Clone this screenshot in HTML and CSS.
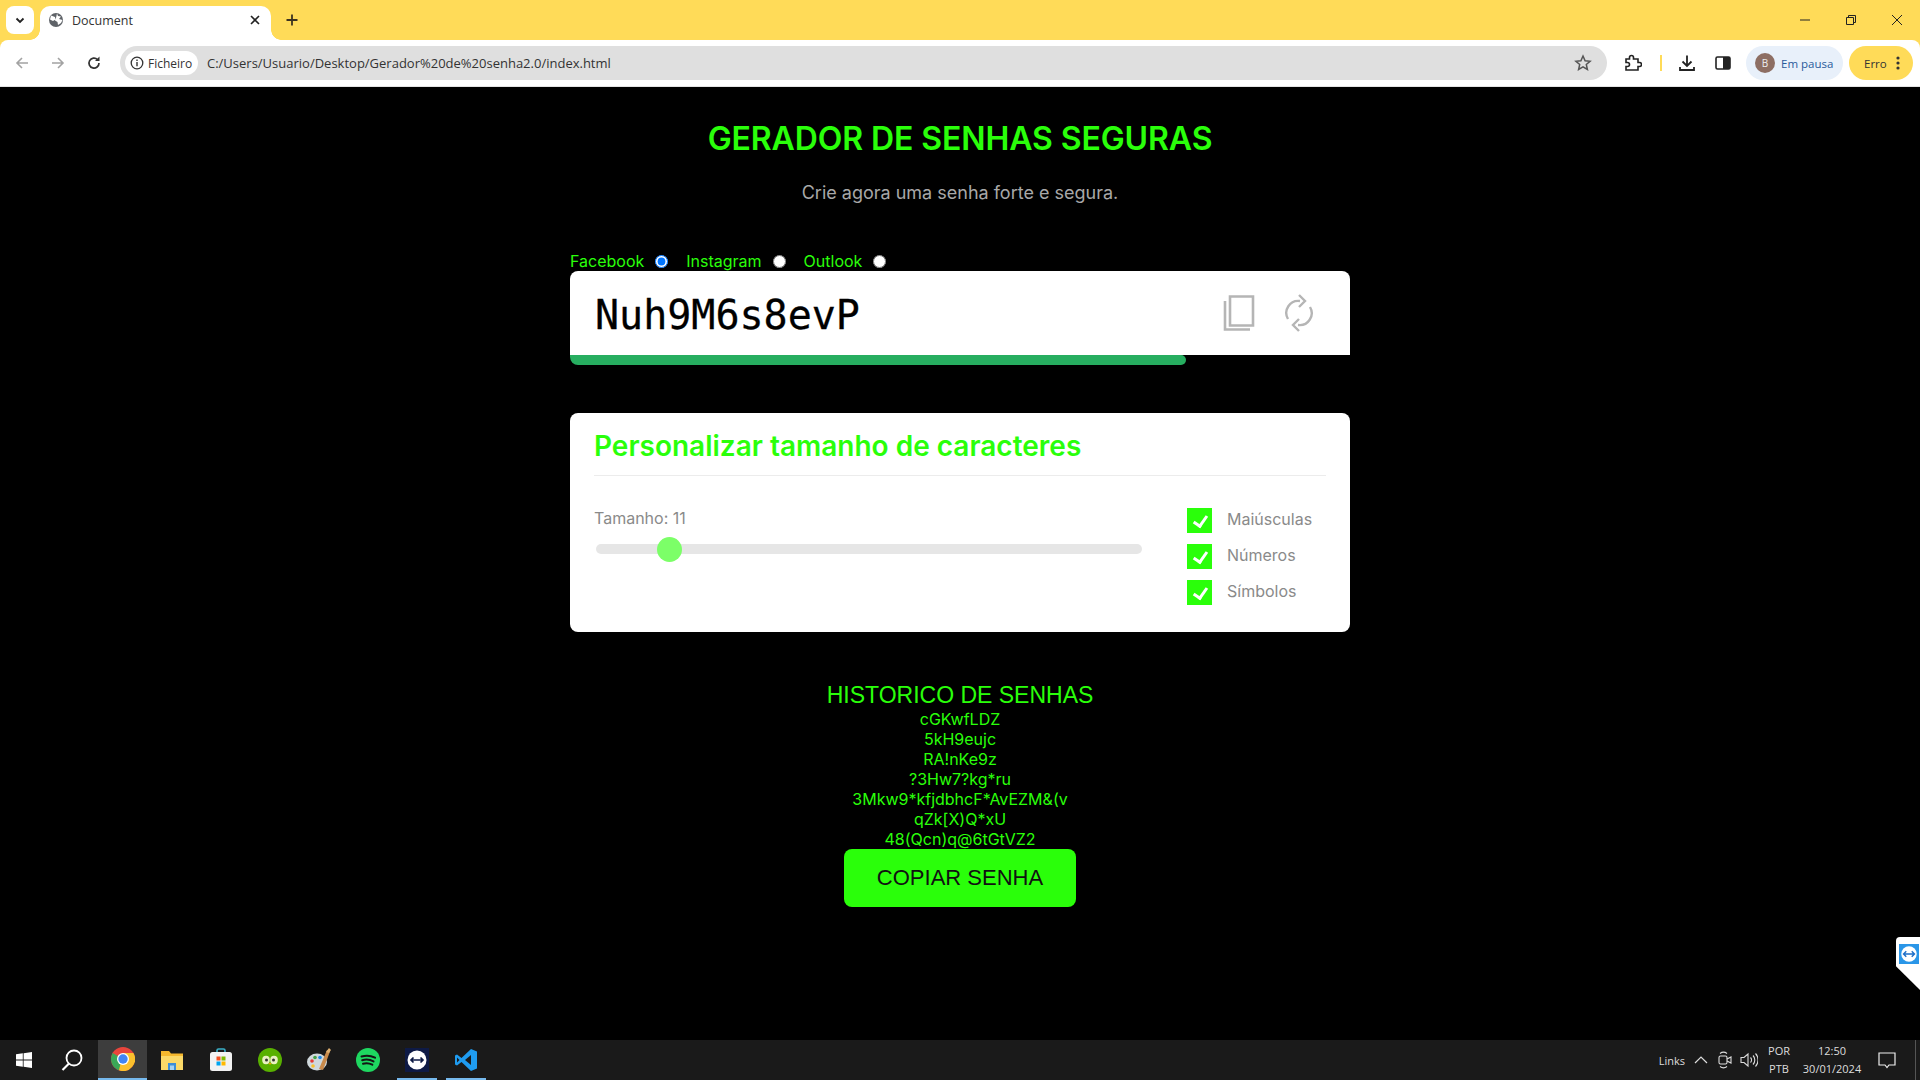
FILE: index.html
```html
<!DOCTYPE html>
<html lang="pt">
<head>
<meta charset="utf-8">
<title>Document</title>
<link rel="stylesheet" href="styles.css">
</head>
<body>
<header class="browser">
  <div class="tabstrip">
    <div class="tab-search"><svg width="12" height="12" viewBox="0 0 12 12"><path d="M2.5 4.5 6 8l3.5-3.5" fill="none" stroke="#222" stroke-width="1.8"/></svg></div>
    <div class="tab">
      <svg class="favicon" width="16" height="16" viewBox="0 0 16 16"><circle cx="8" cy="8" r="7" fill="#5f6368"/><path d="M3 3.5 7 5l.5 2.5L5 9 2 7.5zM9 1.5l1 2.5 3 .5-2 2.5 3.5 1-1.500 3-3 2-.5-3-2.500-1.500 1-2.500z" fill="#fff"/></svg>
      <span class="tab-title">Document</span>
      <svg class="tab-close" width="10" height="10" viewBox="0 0 10 10"><path d="M1 1l8 8M9 1 1 9" stroke="#222" stroke-width="1.600"/></svg>
    </div>
    <svg class="newtab" width="12" height="12" viewBox="0 0 12 12"><path d="M6 .5v11M.5 6h11" stroke="#3c3320" stroke-width="1.800"/></svg>
    <div class="winctl">
      <svg width="12" height="12" viewBox="0 0 12 12"><path d="M1 6h10" stroke="#222" stroke-width="1"/></svg>
      <svg width="12" height="12" viewBox="0 0 12 12"><path d="M1.500 3.500h7v7h-7zM3.500 3.500v-2h7v7h-2" fill="none" stroke="#222" stroke-width="1"/></svg>
      <svg width="12" height="12" viewBox="0 0 12 12"><path d="M1 1l10 10M11 1 1 11" stroke="#222" stroke-width="1"/></svg>
    </div>
  </div>
  <div class="toolbar">
    <svg class="navicon" width="16" height="16" viewBox="0 0 16 16"><path d="M14 8H3M8 3 3 8l5 5" fill="none" stroke="#a3a3a3" stroke-width="1.600"/></svg>
    <svg class="navicon" width="16" height="16" viewBox="0 0 16 16"><path d="M2 8h11M8 3l5 5-5 5" fill="none" stroke="#a3a3a3" stroke-width="1.600"/></svg>
    <svg class="navicon" width="16" height="16" viewBox="0 0 16 16"><path d="M13 8a5 5 0 1 1-1.500-3.500" fill="none" stroke="#333" stroke-width="1.700"/><path d="M13.500 1.500v4.500H9z" fill="#333"/></svg>
    <div class="omnibox">
      <div class="chip">
        <svg width="14" height="14" viewBox="0 0 14 14"><circle cx="7" cy="7" r="5.800" fill="none" stroke="#333" stroke-width="1.300"/><path d="M7 6v4.200M7 3.600v1.300" stroke="#333" stroke-width="1.400"/></svg>
        <span>Ficheiro</span>
      </div>
      <span class="url">C:/Users/Usuario/Desktop/Gerador%20de%20senha2.0/index.html</span>
      <svg class="star" width="18" height="18" viewBox="0 0 18 18"><path d="m9 2 2.100 4.700 5 .5-3.800 3.300 1.100 5L9 12.900 4.600 15.500l1.100-5L1.900 7.200l5-.5z" fill="none" stroke="#555" stroke-width="1.500"/></svg>
    </div>
    <svg class="tool tool-ext" width="18" height="18" viewBox="0 0 18 18"><path d="M2 5h3.500V3.500a2 2 0 0 1 4 0V5H14v3.500h1.500a2 2 0 0 1 0 4H14V16H2v-3.500h1.500a2 2 0 0 0 0-4H2z" fill="none" stroke="#222" stroke-width="1.600"/></svg>
    <span class="toolsep"></span>
    <svg class="tool tool-dl" width="18" height="18" viewBox="0 0 18 18"><path d="M9 1.500v10M4.500 7.500 9 12l4.500-4.500M2 13v3h14v-3" fill="none" stroke="#222" stroke-width="1.800"/></svg>
    <svg class="tool tool-side" width="16" height="16" viewBox="0 0 16 16"><rect x="1" y="2" width="14" height="12" rx="1.500" fill="none" stroke="#222" stroke-width="1.600"/><rect x="8" y="2" width="7" height="12" fill="#222"/></svg>
    <div class="profile"><span class="avatar">B</span><span class="profile-text">Em pausa</span></div>
    <div class="error-pill"><span>Erro</span><svg width="4" height="14" viewBox="0 0 4 14"><circle cx="2" cy="2" r="1.600" fill="#333"/><circle cx="2" cy="7" r="1.600" fill="#333"/><circle cx="2" cy="12" r="1.600" fill="#333"/></svg></div>
  </div>
</header>

<main class="page">
  <h1 class="title">GERADOR DE SENHAS SEGURAS</h1>
  <p class="subtitle">Crie agora uma senha forte e segura.</p>

  <form class="radios">
    <label class="radio-item">Facebook <input type="radio" name="site" checked></label>
    <label class="radio-item">Instagram <input type="radio" name="site"></label>
    <label class="radio-item">Outlook <input type="radio" name="site"></label>
  </form>

  <section class="password-card">
    <div class="password-row">
      <span class="password">Nuh9M6s8evP</span>
      <svg class="pw-copy" width="32" height="36" viewBox="0 0 32 36"><path d="M7 1.500h23v29H7z" fill="none" stroke="#b5b5b5" stroke-width="2.600"/><path d="M2 6v28.500h25" fill="none" stroke="#b5b5b5" stroke-width="2.600"/></svg>
      <svg class="pw-refresh" width="30" height="38" viewBox="0 0 30 38"><path d="M4 25A12 12 0 0 1 16 7M26 13a12 12 0 0 1-12 18" fill="none" stroke="#b5b5b5" stroke-width="2.400"/><path d="M15 1l6 6-6 6M15 25l-6 6 6 6" fill="none" stroke="#b5b5b5" stroke-width="2.400"/></svg>
    </div>
    <div class="strength"><div class="strength-fill"></div></div>
  </section>

  <section class="settings-card">
    <h2 class="settings-title">Personalizar tamanho de caracteres</h2>
    <div class="settings-body">
      <div class="size">
        <label class="size-label" for="size">Tamanho: 11</label>
        <input class="size-range" id="size" type="range" min="4" max="64" value="11">
      </div>
      <div class="options">
        <label class="option"><input type="checkbox" checked><span class="option-text">Maiúsculas</span></label>
        <label class="option"><input type="checkbox" checked><span class="option-text">Números</span></label>
        <label class="option"><input type="checkbox" checked><span class="option-text">Símbolos</span></label>
      </div>
    </div>
  </section>

  <section class="history">
    <h3 class="history-title">HISTORICO DE SENHAS</h3>
    <ul class="history-list">
      <li>cGKwfLDZ</li>
      <li>5kH9eujc</li>
      <li>RA!nKe9z</li>
      <li>?3Hw7?kg*ru</li>
      <li>3Mkw9*kfjdbhcF*AvEZM&amp;(v</li>
      <li>qZk[X)Q*xU</li>
      <li>48(Qcn)q@6tGtVZ2</li>
    </ul>
    <button class="copy-btn" type="button">COPIAR SENHA</button>
  </section>

  <div class="tv-tab">
    <svg width="20" height="20" viewBox="0 0 22 22"><rect width="22" height="22" fill="#2a96e8"/><circle cx="11" cy="11" r="8.500" fill="#fff"/><path d="M5 11h12M8 8l-3 3 3 3M14 8l3 3-3 3" fill="none" stroke="#1e6fc8" stroke-width="1.600"/></svg>
  </div>
</main>

<footer class="taskbar">
  <div class="task-sys">
    <svg width="16" height="16" viewBox="0 0 16 16"><path d="M0 2.300 6.800 1.300v6.300H0zM7.600 1.200 16 0v7.600H7.600zM0 8.400h6.800v6.300L0 13.700zM7.600 8.400H16V16l-8.400-1.200z" fill="#fff"/></svg>
  </div>
  <div class="task-sys">
    <svg width="24" height="24" viewBox="0 0 24 24"><circle cx="14" cy="10" r="7.500" fill="none" stroke="#fff" stroke-width="1.800"/><path d="M9 15.500 2.500 22" stroke="#fff" stroke-width="2.200"/></svg>
  </div>
  <div class="task-apps">
    <div class="task-app active">
      <svg width="24" height="24" viewBox="0 0 24 24"><circle cx="12" cy="12" r="12" fill="#e8453c"/><path d="M12 12 1.600 6A12 12 0 0 0 8 23.300z" fill="#3aa757"/><path d="M12 6h10.400A12 12 0 0 1 8 23.300z" fill="#fbc02d"/><circle cx="12" cy="12" r="6" fill="#fff"/><circle cx="12" cy="12" r="4.700" fill="#4285f4"/></svg>
    </div>
    <div class="task-app">
      <svg width="22" height="20" viewBox="0 0 22 20"><path d="M0 1h8l2 2.500h12V8H0z" fill="#f5b82e"/><path d="M0 6h22v14H0z" fill="#fbd968"/><path d="M7 13h8v7H7z" fill="#3c8ed8"/><path d="M9 15.500h4V20H9z" fill="#a5d2f2"/></svg>
    </div>
    <div class="task-app">
      <svg width="24" height="24" viewBox="0 0 24 24"><path d="M8 5V2.500a1.500 1.500 0 0 1 1.500-1.500h5A1.500 1.500 0 0 1 16 2.500V5" fill="none" stroke="#3ab0c8" stroke-width="1.600"/><rect x="1" y="4" width="22" height="19" rx="2.500" fill="#f2f2f2"/><rect x="7.500" y="8.500" width="4" height="4" fill="#f25022"/><rect x="12.500" y="8.500" width="4" height="4" fill="#7fba00"/><rect x="7.500" y="13.500" width="4" height="4" fill="#00a4ef"/><rect x="12.500" y="13.500" width="4" height="4" fill="#ffb900"/></svg>
    </div>
    <div class="task-app">
      <svg width="24" height="24" viewBox="0 0 24 24"><circle cx="12" cy="12" r="12" fill="#58b000"/><ellipse cx="8" cy="12" rx="3.800" ry="4.200" fill="#e8f0c0"/><ellipse cx="16" cy="12" rx="3.800" ry="4.200" fill="#e8f0c0"/><circle cx="8.500" cy="12" r="1.500" fill="#333"/><circle cx="15.500" cy="12" r="1.500" fill="#333"/><path d="m10.500 15 1.500 2 1.500-2z" fill="#f0a000"/></svg>
    </div>
    <div class="task-app">
      <svg width="26" height="26" viewBox="0 0 26 26"><ellipse cx="11" cy="15" rx="10" ry="8.500" fill="#cfd8dc"/><circle cx="6" cy="14" r="1.800" fill="#e53935"/><circle cx="9" cy="10.500" r="1.800" fill="#43a047"/><circle cx="14" cy="10.500" r="1.800" fill="#1e88e5"/><circle cx="7" cy="19" r="1.800" fill="#fbc02d"/><path d="m13 22 8-19 3 1.500-7 18.500z" fill="#c98a4b"/><path d="m20 5 3-4 2 2-2 3z" fill="#e0b070"/></svg>
    </div>
    <div class="task-app">
      <svg width="24" height="24" viewBox="0 0 24 24"><circle cx="12" cy="12" r="12" fill="#1ed760"/><path d="M5.500 8.500c4.500-1.300 9.500-.9 13.500 1.200M6.200 12.200c3.800-1 8-.6 11.300 1.200M7 15.700c3.200-.8 6.500-.5 9.300 1" fill="none" stroke="#141414" stroke-width="2" stroke-linecap="round"/></svg>
    </div>
    <div class="task-app running">
      <svg width="24" height="24" viewBox="0 0 24 24"><rect width="24" height="24" fill="#0e1a45"/><circle cx="12" cy="12" r="9.500" fill="#fff"/><path d="M6 12h12M8.500 9.500 6 12l2.500 2.500M15.500 9.500 18 12l-2.500 2.500" fill="none" stroke="#0e1a45" stroke-width="1.700"/></svg>
    </div>
    <div class="task-app running">
      <svg width="24" height="24" viewBox="0 0 24 24"><path d="M17 1 7.500 10 3 6.500 1 7.500v9l2 1 4.500-3.500 9.500 9 6-2.500V3.500z" fill="#1f9cf0"/><path d="M17 7v10l-6-5z" fill="#1a1a1a"/><path d="m3 9.500 2.500 2.500L3 14.500z" fill="#1a1a1a"/></svg>
    </div>
  </div>
  <div class="tray">
    <span class="tray-links">Links</span>
    <svg class="tray-chev" width="14" height="8" viewBox="0 0 14 8"><path d="M1 7l6-6 6 6" fill="none" stroke="#ddd" stroke-width="1.200"/></svg>
    <svg class="tray-meet" width="14" height="18" viewBox="0 0 14 18"><rect x="1" y="5" width="8" height="8" rx="1.500" fill="none" stroke="#ddd" stroke-width="1.100"/><path d="m9 8 4-2v6l-4-2M2 2.500c2-1.500 5-1.500 7 0M2 15.500c2 1.500 5 1.500 7 0" fill="none" stroke="#ddd" stroke-width="1.100"/></svg>
    <svg class="tray-vol" width="18" height="16" viewBox="0 0 18 16"><path d="M1 5.500h3L8 2v12l-4-3.500H1z" fill="none" stroke="#ddd" stroke-width="1.100"/><path d="M10.500 5.500a3.500 3.500 0 0 1 0 5M13 3.500a6.500 6.500 0 0 1 0 9M15.500 1.500a9.500 9.500 0 0 1 0 13" fill="none" stroke="#ddd" stroke-width="1.100"/></svg>
    <div class="tray-lang"><span>POR</span><span>PTB</span></div>
    <div class="tray-clock"><span>12:50</span><span>30/01/2024</span></div>
    <svg class="tray-notif" width="18" height="17" viewBox="0 0 18 17"><path d="M1 1h16v12h-6l-2 2.500L7 13H1z" fill="none" stroke="#eee" stroke-width="1.200"/></svg>
    <span class="tray-edge"></span>
  </div>
</footer>
</body>
</html>
```

FILE: styles.css
```css
* { box-sizing: border-box; }
html, body { height: 100%; }
body {
  margin: 0;
  display: flex;
  flex-direction: column;
  height: 1080px;
  overflow: hidden;
  background: #000;
  font-family: Inter, "Liberation Sans", sans-serif;
}

/* browser chrome */
.browser { flex: none; height: 87px; background: #ffdb58; border-bottom: 1px solid #e4e4e4; }
.tabstrip {
  height: 40px;
  display: flex;
  align-items: flex-end;
  padding-left: 6px;
}
.tab-search {
  width: 28px; height: 28px;
  margin-bottom: 6px;
  background: #fff;
  border-radius: 8px;
  display: flex; align-items: center; justify-content: center;
}
.tab {
  position: relative;
  z-index: 1;
  width: 231px; height: 34px;
  margin-left: 6px;
  background: #fff;
  border-radius: 10px 10px 0 0;
  display: flex; align-items: center;
  padding: 0 11px 6px 8px;
}
.tab::before, .tab::after {
  content: "";
  position: absolute;
  bottom: 0;
  width: 10px; height: 10px;
}
.tab::before { left: -10px; background: radial-gradient(circle at 0 0, transparent 9.500px, #fff 10px); }
.tab::after { right: -10px; background: radial-gradient(circle at 100% 0, transparent 9.500px, #fff 10px); }
.favicon { flex: none; }
.tab-title { margin-left: 8px; flex: 1; font: 12.500px "Open Sans", sans-serif; color: #333; }
.newtab { margin: 0 0 14px 15px; }
.winctl {
  margin-left: auto;
  margin-right: 17px;
  height: 40px;
  display: flex; align-items: center;
  gap: 34px;
}
.toolbar {
  height: 46px;
  display: flex; align-items: center;
  padding-left: 14px;
  background: #fff;
  border-radius: 8px 8px 0 0;
}
.navicon { flex: none; margin-right: 20px; }
.navicon:nth-child(3) { margin-right: 19px; }
.omnibox {
  width: 1487px; height: 34px;
  background: #dfdfdf;
  border-radius: 17px;
  display: flex; align-items: center;
  padding-left: 5px;
  margin-left: -1px;
}
.chip {
  height: 24px; width: 73px;
  background: #fff;
  border-radius: 12px;
  display: flex; align-items: center; gap: 4px;
  padding-left: 5px;
  font: 12px "Open Sans", sans-serif; color: #333;
}
.url { margin-left: 9px; font: 13px "Open Sans", sans-serif; color: #333; }
.star { margin-left: auto; margin-right: 15px; }
.tool { flex: none; }
.tool-ext { margin-left: 17px; }
.toolsep { width: 2px; height: 16px; background: #ffdb58; margin-left: 18px; }
.tool-dl { margin-left: 16px; }
.tool-side { margin-left: 19px; }
.profile {
  width: 97px; height: 34px;
  margin-left: 15px;
  background: #e8f0fa;
  border-radius: 17px;
  display: flex; align-items: center; gap: 6px;
  padding-left: 9px;
}
.avatar {
  width: 20px; height: 20px;
  border-radius: 50%;
  background: #8d6e63; color: #eee;
  display: flex; align-items: center; justify-content: center;
  font: 10px "Open Sans", sans-serif;
}
.profile-text { font: 11.500px "Open Sans", sans-serif; color: #2a5a9a; white-space: nowrap; }
.error-pill {
  width: 64px; height: 34px;
  margin-left: 6px;
  background: #ffdb58;
  border-radius: 17px;
  display: flex; align-items: center; gap: 9px;
  padding-left: 15px;
  font: 11.500px "Open Sans", sans-serif; color: #333;
}

/* page */
.page {
  flex: 1;
  position: relative;
  display: flex;
  flex-direction: column;
  align-items: center;
  color: #2aff0a;
  min-height: 0;
}
.title { margin: 33px 0 0; font-size: 32px; line-height: 38px; font-weight: 600; letter-spacing: -.1px; color: #2aff0a; }
.subtitle { margin: 24px 0 0; font-size: 18px; line-height: 22px; color: #a8a8a8; font-weight: 400; }
.radios { width: 780px; margin-top: 47px; height: 20px; display: flex; align-items: center; font-size: 16px; }
.radio-item { display: flex; align-items: center; margin-right: 18px; }
.radio-item input { margin: 0 0 0 11px; width: 13px; height: 13px; }

.password-card {
  width: 780px; height: 94px;
  border-radius: 8px;
  overflow: hidden;
  background: #000;
  display: flex; flex-direction: column;
}
.password-row {
  height: 84px;
  background: #fff;
  display: flex; align-items: center;
  padding: 0 36px 0 25px;
}
.password { flex: 1; margin-top: 4px; font: 40px/48px "DejaVu Sans Mono", monospace; -webkit-text-stroke: .3px #000; color: #000; }
.pw-refresh { margin-left: 29px; }
.strength { height: 10px; background: #000; }
.strength-fill { width: 616px; height: 100%; background: #27ae60; border-radius: 0 5px 5px 5px; }

.settings-card {
  width: 780px; height: 219px;
  margin-top: 48px;
  background: #fff;
  border-radius: 8px;
  padding: 0 24px;
}
.settings-title {
  margin: 0;
  height: 63px;
  border-bottom: 1px solid #ececec;
  padding-top: 16px;
  font-size: 28px; line-height: 34px; font-weight: 600;
  color: #2aff0a;
}
.settings-body { display: flex; justify-content: space-between; }
.size { width: 550px; padding: 32px 0 0; }
.size-label { display: block; font-size: 16px; line-height: 20px; color: #8a8a8a; }
.size-range {
  -webkit-appearance: none; appearance: none;
  display: block;
  width: 546px; height: 10px;
  margin: 16px 0 0 2px;
  background: #e6e6e6;
  border-radius: 5px;
}
.size-range::-webkit-slider-thumb {
  -webkit-appearance: none; appearance: none;
  width: 25px; height: 25px;
  border-radius: 50%;
  background: #7cff68;
}
.options { width: 139px; padding-top: 32px; display: flex; flex-direction: column; gap: 11px; }
.option { height: 25px; display: flex; align-items: center; gap: 15px; font-size: 16px; color: #8a8a8a; }
.option-text { margin-top: -3px; }
.option input {
  -webkit-appearance: none; appearance: none;
  flex: none;
  position: relative;
  width: 25px; height: 25px;
  margin: 0;
  background: #2aff0a;
}
.option input::after {
  content: "";
  position: absolute;
  left: 9px; top: 5px;
  width: 6px; height: 11px;
  border: solid #fff;
  border-width: 0 3px 3px 0;
  transform: rotate(35deg);
}

.history { margin-top: 49px; display: flex; flex-direction: column; align-items: center; }
.history-title { margin: 0; font-size: 23px; line-height: 28px; font-weight: 400; font-family: "Liberation Sans", sans-serif; color: #2aff0a; }
.history-list { list-style: none; margin: 0; padding: 0; text-align: center; font-size: 16px; line-height: 20px; }
.copy-btn {
  width: 232px; height: 58px;
  border: 0;
  border-radius: 8px;
  background: #2aff0a;
  color: #111;
  font-family: "Liberation Sans", sans-serif;
  font-size: 22px;
}
.tv-tab {
  position: absolute;
  right: 0; top: 850px;
  width: 24px; height: 53px;
  padding: 7px 0 0 3px;
  background: #fff;
  border-radius: 4px 0 0 0;
  clip-path: polygon(0 0, 100% 0, 100% 100%, 0 55%);
}

/* taskbar */
.taskbar {
  flex: none;
  height: 40px;
  background: #1a1a1a;
  display: flex; align-items: center;
  color: #ddd;
}
.task-sys { width: 48px; display: flex; justify-content: center; }
.task-apps { display: flex; margin-left: 2px; }
.task-app { width: 49px; height: 40px; display: flex; align-items: center; justify-content: center; }
.task-app.active { background: #3d3d3d; border-bottom: 2px solid #76b9ed; }
.task-app.running { background: linear-gradient(#76b9ed, #76b9ed) bottom center / 40px 2px no-repeat; }
.tray { margin-left: auto; display: flex; align-items: center; height: 40px; font: 11px "Open Sans", sans-serif; }
.tray-links { margin-right: 9px; }
.tray-chev { margin-right: 10px; }
.tray-meet { margin-right: 8px; }
.tray-vol { margin-right: 8px; }
.tray-lang, .tray-clock { display: flex; flex-direction: column; align-items: center; line-height: 18px; }
.tray-lang { width: 26px; }
.tray-clock { margin-left: 8px; width: 64px; }
.tray-notif { margin-left: 14px; }
.tray-edge { width: 1px; height: 40px; background: #555; margin-left: 19px; margin-right: 4px; }
```
